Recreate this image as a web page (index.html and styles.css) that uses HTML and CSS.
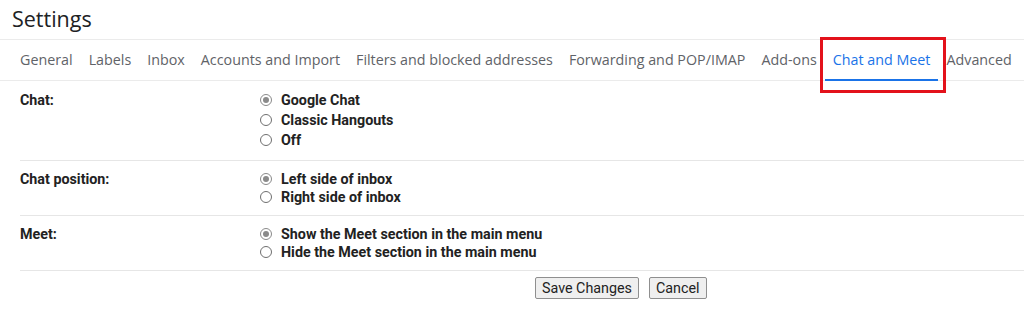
FILE: index.html
```html
<!DOCTYPE html>
<html>
<head>
<meta charset="utf-8">
<link rel="stylesheet" href="styles.css">
</head>
<body>
<header class="header"><h1 class="title">Settings</h1></header>
<nav class="tabs">
  <span class="tab">General</span>
  <span class="tab">Labels</span>
  <span class="tab">Inbox</span>
  <span class="tab">Accounts and Import</span>
  <span class="tab">Filters and blocked addresses</span>
  <span class="tab">Forwarding and POP/IMAP</span>
  <span class="tab">Add-ons</span>
  <span class="tab active">Chat and Meet</span>
  <span class="tab">Advanced</span>
</nav>
<main class="content">
  <section class="row row-first">
    <div class="label">Chat:</div>
    <div class="options">
      <div class="option"><span class="radio checked"></span>Google Chat</div>
      <div class="option"><span class="radio"></span>Classic Hangouts</div>
      <div class="option"><span class="radio"></span>Off</div>
    </div>
  </section>
  <section class="row">
    <div class="label">Chat position:</div>
    <div class="options">
      <div class="option"><span class="radio checked"></span>Left side of inbox</div>
      <div class="option"><span class="radio"></span>Right side of inbox</div>
    </div>
  </section>
  <section class="row">
    <div class="label">Meet:</div>
    <div class="options">
      <div class="option"><span class="radio checked"></span>Show the Meet section in the main menu</div>
      <div class="option"><span class="radio"></span>Hide the Meet section in the main menu</div>
    </div>
  </section>
  <div class="actions">
    <button class="btn">Save Changes</button>
    <button class="btn">Cancel</button>
  </div>
</main>
</body>
</html>
```
FILE: styles.css
```css
html, body {
  margin: 0;
  padding: 0;
  background: #fff;
}
body {
  font-family: Roboto, "Liberation Sans", sans-serif;
  color: #222;
}
.header {
  height: 40px;
  border-bottom: 1px solid #ebebeb;
  box-sizing: border-box;
  display: flex;
  align-items: center;
}
.title {
  margin: 0 0 2px 12px;
  font-family: "Open Sans", sans-serif;
  font-weight: 400;
  font-size: 21.5px;
  color: #202124;
}
.tabs {
  display: flex;
  height: 41px;
  box-sizing: border-box;
  border-bottom: 1px solid #ebebeb;
  padding-left: 12px;
  white-space: nowrap;
}
.tab {
  position: relative;
  display: flex;
  align-items: center;
  padding: 0 8px 1px;
  font-family: "Open Sans", sans-serif;
  font-size: 14.3px;
  color: #5f6368;
}
.tab.active {
  color: #1a73e8;
}
.tab.active::before {
  content: "";
  position: absolute;
  left: 0;
  right: 0;
  bottom: -1px;
  height: 2px;
  background: #1a73e8;
}
.tab.active::after {
  content: "";
  position: absolute;
  left: -5px;
  right: -8px;
  top: -3px;
  bottom: -13px;
  border: 3px solid #e3121b;
}
.content {
  padding-left: 20px;
}
.row {
  display: flex;
  border-bottom: 1px solid #e6e6e6;
  padding: 9px 0 9px;
  font-size: 14.3px;
  font-weight: 700;
  line-height: 18px;
}
.row-first {
  padding: 9px 0 10px;
  line-height: 20px;
}
.label {
  width: 240px;
  flex: none;
}
.options {
  display: flex;
  flex-direction: column;
}
.option {
  display: flex;
  align-items: center;
}
.radio {
  width: 12px;
  height: 12px;
  box-sizing: border-box;
  border: 1px solid #6f6f6f;
  border-radius: 50%;
  margin-right: 9px;
  display: flex;
  align-items: center;
  justify-content: center;
  flex: none;
}
.radio.checked {
  border-color: #8a8a8a;
}
.radio.checked::after {
  content: "";
  width: 6px;
  height: 6px;
  border-radius: 50%;
  background: #8a8a8a;
}
.actions {
  display: flex;
  gap: 10px;
  padding: 6px 0 0 515px;
}
.btn {
  font-family: Roboto, sans-serif;
  font-size: 14.3px;
  color: #222;
  background: #efefef;
  border: 1px solid #8f8f8f;
  border-radius: 2px;
  height: 22px;
  padding: 0 6px;
  line-height: 20px;
}
```
